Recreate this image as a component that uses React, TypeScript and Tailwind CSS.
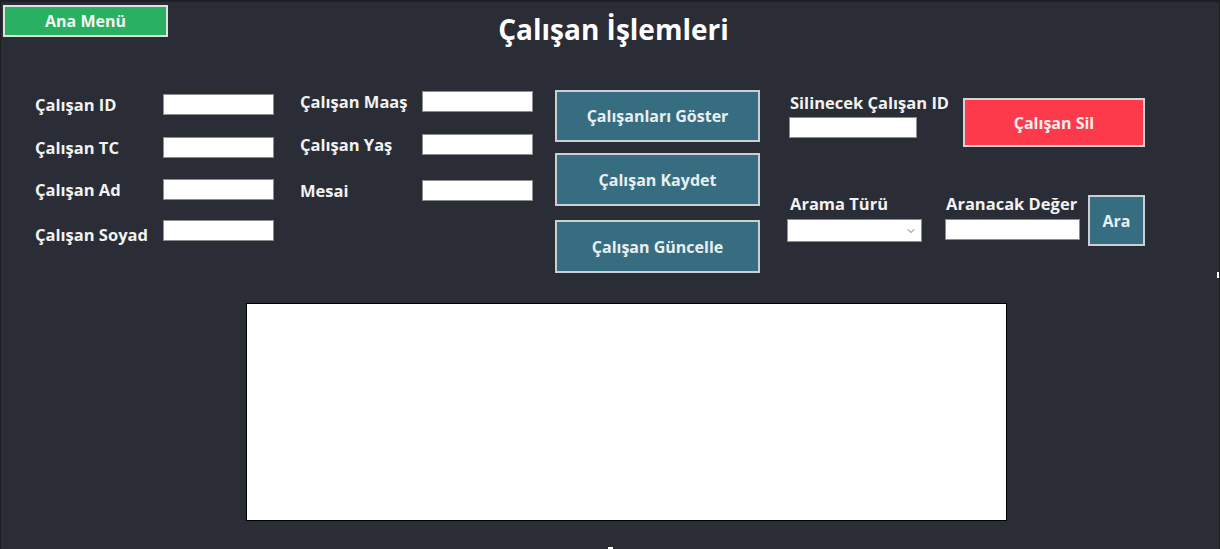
import { ChevronDown } from 'lucide-react';

const font = { fontFamily: '"Open Sans", "DejaVu Sans", sans-serif' };

function Field({ label, labelW, inputW = 'w-[111px]' }: { label: string; labelW: string; inputW?: string }) {
  return (
    <div className="flex items-center h-[21px]">
      <span className={`${labelW} text-[16.5px] leading-[21px] font-bold text-[#f2f2f2] whitespace-nowrap`}>{label}</span>
      <input className={`${inputW} h-[21px] bg-white border border-[#8c8c8c] outline-none`} />
    </div>
  );
}

function ActionButton({ children, className }: { children: React.ReactNode; className: string }) {
  return (
    <button
      className={`border-2 border-[#c9d0d3] bg-[#376d80] text-[16px] font-bold text-[#e9eff1] flex items-center justify-center ${className}`}
    >
      {children}
    </button>
  );
}

export default function App() {
  return (
    <div
      style={font}
      className="relative w-[1220px] h-[549px] overflow-hidden bg-[#2a2d35] border-t-2 border-l border-r border-[#1d1f24]"
    >
      {/* Header */}
      <div className="grid grid-cols-[1fr_auto_1fr] h-[86px]">
        <div>
          <button className="ml-[2px] mt-[3px] w-[165px] h-[32px] border-2 border-[#dbe4de] bg-[#29b062] text-[16px] font-bold text-[#f3f6f3] flex items-center justify-center">
            Ana Menü
          </button>
        </div>
        <h1 className="ml-[7px] mt-[8px] text-[28px] leading-[38px] font-bold text-white">Çalışan İşlemleri</h1>
        <div />
      </div>

      {/* Form */}
      <div className="flex h-[215px] pl-[34px]">
        <div className="flex flex-col mt-[6px]">
          <Field label="Çalışan ID" labelW="w-[128px]" />
          <div className="mt-[22px]">
            <Field label="Çalışan TC" labelW="w-[128px]" />
          </div>
          <div className="mt-[21px]">
            <Field label="Çalışan Ad" labelW="w-[128px]" />
          </div>
          <div className="flex items-start mt-[20px] h-[21px]">
            <span className="w-[128px] mt-[4px] text-[16.5px] leading-[21px] font-bold text-[#f2f2f2] whitespace-nowrap">
              Çalışan Soyad
            </span>
            <input className="w-[111px] h-[21px] bg-white border border-[#8c8c8c] outline-none" />
          </div>
        </div>

        <div className="flex flex-col mt-[3px] ml-[26px]">
          <Field label="Çalışan Maaş" labelW="w-[122px]" />
          <div className="mt-[22px]">
            <Field label="Çalışan Yaş" labelW="w-[122px]" />
          </div>
          <div className="mt-[25px]">
            <Field label="Mesai" labelW="w-[122px]" />
          </div>
        </div>

        <div className="flex flex-col mt-[2px] ml-[22px]">
          <ActionButton className="w-[205px] h-[52px]">Çalışanları Göster</ActionButton>
          <ActionButton className="w-[205px] h-[53px] mt-[11px]">Çalışan Kaydet</ActionButton>
          <ActionButton className="w-[205px] h-[53px] mt-[14px]">Çalışan Güncelle</ActionButton>
        </div>

        <div className="flex flex-col ml-[27px] w-[358px]">
          <div className="flex justify-between">
            <div className="flex flex-col mt-[5px]">
              <span className="ml-[3px] text-[16.5px] leading-[20px] font-bold text-[#f2f2f2] whitespace-nowrap">
                Silinecek Çalışan ID
              </span>
              <input className="ml-[2px] mt-[4px] w-[128px] h-[21px] bg-white border border-[#8c8c8c] outline-none" />
            </div>
            <button className="mt-[10px] w-[182px] h-[49px] border-2 border-[#d3d3d3] bg-[#fd3a4b] text-[16px] font-bold text-[#f6eef0] flex items-center justify-center">
              Çalışan Sil
            </button>
          </div>

          <div className="flex items-start mt-[43px]">
            <div className="flex flex-col w-[135px] mt-[4px]">
              <span className="ml-[3px] text-[16.5px] leading-[20px] font-bold text-[#f2f2f2] whitespace-nowrap">Arama Türü</span>
              <div className="mt-[5px] w-[135px] h-[23px] bg-white border border-[#8c8c8c] flex items-center justify-end pr-[4px]">
                <ChevronDown size={12} strokeWidth={1.5} className="text-[#444]" />
              </div>
            </div>
            <div className="flex flex-col w-[135px] ml-[23px] mt-[4px]">
              <span className="ml-[1px] text-[16.5px] leading-[20px] font-bold text-[#f2f2f2] whitespace-nowrap">Aranacak Değer</span>
              <input className="mt-[5px] w-[135px] h-[21px] bg-white border border-[#8c8c8c] outline-none" />
            </div>
            <ActionButton className="ml-[8px] mt-[5px] w-[57px] h-[51px]">Ara</ActionButton>
          </div>
        </div>
      </div>

      {/* Table */}
      <div className="ml-[245px] w-[761px] h-[218px] bg-white border border-black" />

      {/* resize grips */}
      <span className="absolute right-0 top-[270px] w-[2px] h-[6px] bg-white" />
      <span className="absolute left-[607px] bottom-0 w-[5px] h-[2px] bg-white" />
    </div>
  );
}
